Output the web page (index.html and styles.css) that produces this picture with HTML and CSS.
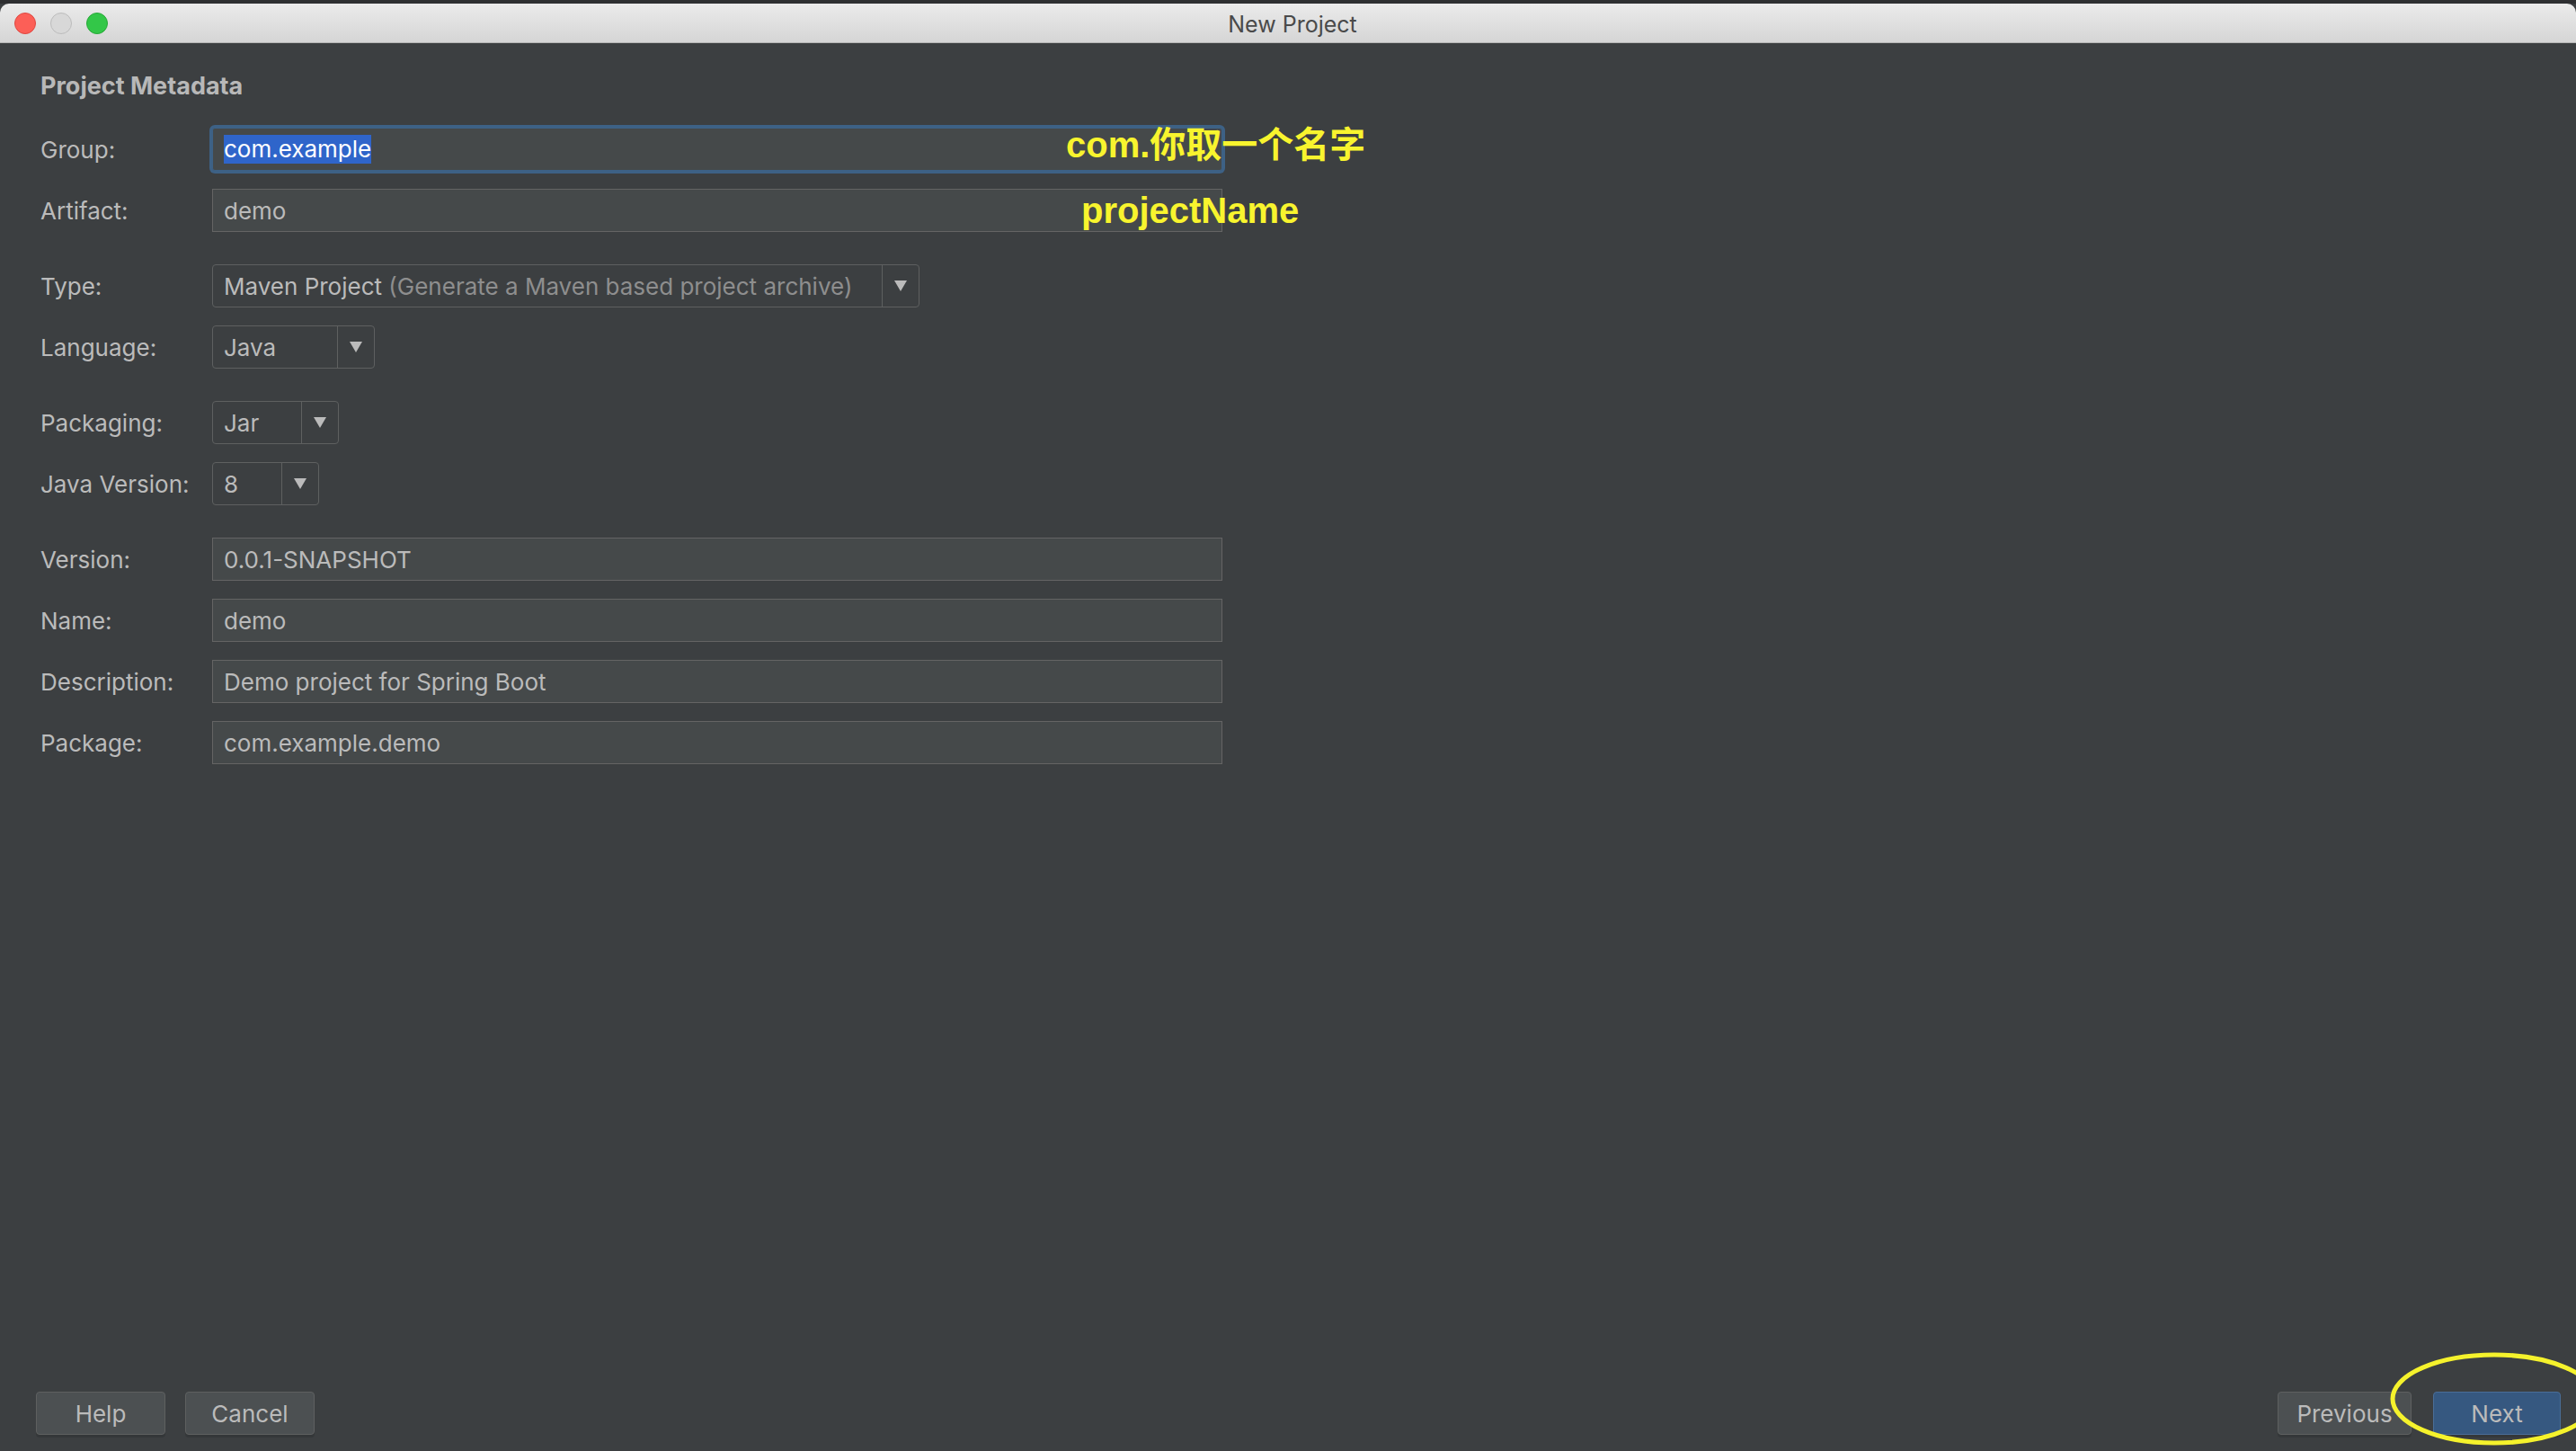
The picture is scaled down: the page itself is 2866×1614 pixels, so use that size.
FILE: index.html
```html
<!DOCTYPE html>
<html lang="en">
<head>
  <meta charset="UTF-8">
  <title>New Project</title>
  <link rel="stylesheet" href="styles.css">
</head>
<body>
  <div class="window">
    <div class="menu-edge"></div>
    <div class="title-bar">
      <div class="lights">
        <span class="light red"></span>
        <span class="light gray"></span>
        <span class="light green"></span>
      </div>
      <div class="title">New Project</div>
      <div></div>
    </div>

    <div class="content">
      <div class="section-title">Project Metadata</div>

      <div class="form">
        <div class="row">
          <label>Group:</label>
          <div class="field focused"><span class="selected">com.example</span></div>
        </div>
        <div class="row">
          <label>Artifact:</label>
          <div class="field">demo</div>
        </div>

        <div class="row spaced">
          <label>Type:</label>
          <div class="combo type">
            <span class="combo-text">Maven Project <span class="hint">(Generate a Maven based project archive)</span></span>
            <span class="combo-arrow"></span>
          </div>
        </div>
        <div class="row">
          <label>Language:</label>
          <div class="combo lang">
            <span class="combo-text">Java</span>
            <span class="combo-arrow"></span>
          </div>
        </div>

        <div class="row spaced">
          <label>Packaging:</label>
          <div class="combo pack">
            <span class="combo-text">Jar</span>
            <span class="combo-arrow"></span>
          </div>
        </div>
        <div class="row">
          <label>Java Version:</label>
          <div class="combo jver">
            <span class="combo-text">8</span>
            <span class="combo-arrow"></span>
          </div>
        </div>

        <div class="row spaced">
          <label>Version:</label>
          <div class="field">0.0.1-SNAPSHOT</div>
        </div>
        <div class="row">
          <label>Name:</label>
          <div class="field">demo</div>
        </div>
        <div class="row">
          <label>Description:</label>
          <div class="field">Demo project for Spring Boot</div>
        </div>
        <div class="row">
          <label>Package:</label>
          <div class="field">com.example.demo</div>
        </div>
      </div>

      <div class="footer">
        <div class="btn-group">
          <button class="btn help">Help</button>
          <button class="btn cancel">Cancel</button>
        </div>
        <div class="btn-group">
          <button class="btn prev">Previous</button>
          <button class="btn primary next">Next</button>
        </div>
      </div>
    </div>

    <!-- annotations drawn over the screenshot -->
    <div class="note note-group">com.你取一个名字</div>
    <div class="note note-artifact">projectName</div>
    <svg class="ring" width="260" height="116" viewBox="0 0 260 116">
      <ellipse cx="130" cy="58" rx="113" ry="49" fill="none" stroke="#f5f22c" stroke-width="5"/>
    </svg>
  </div>
</body>
</html>
```

FILE: styles.css
```css
* { box-sizing: border-box; margin: 0; padding: 0; }
html, body { height: 100%; }
body {
  background: #3c3f41;
  color: #bbbbbb;
  font-family: Inter, "Liberation Sans", sans-serif;
  overflow: hidden;
}
.window {
  position: relative;
  height: 100vh;
  display: flex;
  flex-direction: column;
}
.menu-edge {
  height: 4px;
  background: #2e2f31;
}
.title-bar {
  height: 44px;
  display: grid;
  grid-template-columns: 1fr auto 1fr;
  align-items: center;
  background: linear-gradient(to bottom, #ebebeb, #d5d5d5);
  border-bottom: 1px solid #b4b4b4;
  border-radius: 10px 10px 0 0;
}
.lights {
  display: flex;
  gap: 16px;
  padding-left: 16px;
}
.light {
  width: 24px;
  height: 24px;
  border-radius: 50%;
  border: 1px solid;
}
.light.red { background: #fc5f57; border-color: #df4740; }
.light.gray { background: #d8d8d8; border-color: #bcbcbc; }
.light.green { background: #33c748; border-color: #27a837; }
.title {
  font-size: 25px;
  color: #4a4a4a;
  padding: 2px 0 0 10px;
}

.content {
  flex: 1;
  display: flex;
  flex-direction: column;
  padding: 32px 17px 18px 45px;
}
.section-title {
  font-size: 27px;
  font-weight: 700;
  line-height: 32px;
  color: #b8b8b8;
}
.form {
  margin-top: 10px;
}
.row {
  display: flex;
  align-items: center;
  height: 48px;
  margin-top: 20px;
}
.row.spaced { margin-top: 36px; }
.row label {
  width: 191px;
  font-size: 26px;
  color: #bbbbbb;
}
.field {
  width: 1124px;
  height: 48px;
  background: #45494a;
  border: 1px solid #646464;
  padding-left: 12px;
  display: flex;
  align-items: center;
  font-size: 26px;
  color: #bbbbbb;
}
.field.focused {
  border-color: #3d6185;
  box-shadow: 0 0 0 3px #3d6185;
  border-radius: 3px;
}
.selected {
  background: #2f65ca;
  color: #ffffff;
  line-height: 32px;
}

.combo {
  height: 48px;
  display: flex;
  border: 1px solid #5e6060;
  border-radius: 4px;
  font-size: 26px;
}
.combo.type { width: 787px; }
.combo.lang { width: 181px; }
.combo.pack { width: 141px; }
.combo.jver { width: 119px; }
.combo-text {
  flex: 1;
  display: flex;
  align-items: center;
  padding-left: 12px;
  white-space: pre;
  color: #bbbbbb;
}
.hint { color: #8e8e8e; }
.combo-arrow {
  width: 41px;
  border-left: 1px solid #5e6060;
  display: flex;
  align-items: center;
  justify-content: center;
}
.combo-arrow::after {
  content: "";
  border-left: 7px solid transparent;
  border-right: 7px solid transparent;
  border-top: 12px solid #bbbbbb;
}

.footer {
  margin-top: auto;
  margin-left: -5px;
  display: flex;
  justify-content: space-between;
}
.btn-group {
  display: flex;
  gap: 22px;
}
.btn-group + .btn-group { gap: 24px; }
.btn {
  height: 48px;
  width: 144px;
  background: #4c5052;
  border: 1px solid #5e6060;
  border-radius: 4px;
  box-shadow: 0 3px 0 rgba(0, 0, 0, 0.12);
  color: #bbbbbb;
  font-family: Inter, "Liberation Sans", sans-serif;
  font-size: 26px;
}
.btn.prev { width: 149px; }
.btn.next { width: 142px; }
.btn.primary {
  background: #365880;
  border-color: #4a6d97;
}

.note {
  position: absolute;
  font-family: "Liberation Sans", "Noto Sans CJK SC", sans-serif;
  font-weight: 700;
  font-size: 40px;
  line-height: 48px;
  color: #f8f42e;
}
.note-group { left: 1186px; top: 137px; }
.note-artifact { left: 1203px; top: 210px; }
.ring {
  position: absolute;
  left: 2645px;
  top: 1498px;
}
```
